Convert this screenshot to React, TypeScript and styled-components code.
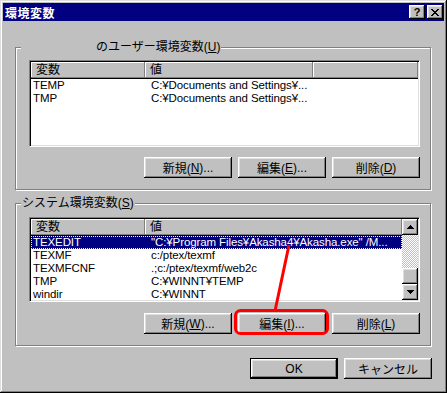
import React from 'react';
import styled, { createGlobalStyle, css } from 'styled-components';

const GlobalStyle = createGlobalStyle`
  html, body {
    margin: 0;
    padding: 0;
    background: #c0c0c0;
  }
  body {
    font-family: "Liberation Sans", "Noto Sans CJK JP", sans-serif;
    font-size: 12px;
    color: #000;
  }
`;

const raised = css`
  box-shadow: inset -1px -1px 0 #000, inset 1px 1px 0 #fff, inset -2px -2px 0 #808080,
    inset 2px 2px 0 #dfdfdf;
`;

const Window = styled.div`
  position: relative;
  width: 447px;
  height: 393px;
  box-sizing: border-box;
  padding: 3px;
  background: #c0c0c0;
  box-shadow: inset -1px -1px 0 #000, inset 1px 1px 0 #dfdfdf, inset -2px -2px 0 #808080,
    inset 2px 2px 0 #fff;
  display: flex;
  flex-direction: column;
`;

const TitleBar = styled.div`
  height: 18px;
  background: #000080;
  color: #fff;
  display: flex;
  align-items: center;
  padding: 0 1px 0 2px;
`;

const Title = styled.span`
  flex: 1;
  font-weight: bold;
  font-size: 12px;
  letter-spacing: 0.5px;
`;

const TitleButtons = styled.div`
  display: flex;
  gap: 2px;
`;

const CaptionButton = styled.div`
  width: 16px;
  height: 14px;
  background: #c0c0c0;
  ${raised};
  display: flex;
  align-items: center;
  justify-content: center;
  color: #000;
  font-weight: bold;
  font-size: 11px;
  line-height: 14px;
`;

const Body = styled.div`
  display: flex;
  flex-direction: column;
  padding: 26px 13px 0 12px;
`;

const Group = styled.div<{ $top?: number }>`
  position: relative;
  box-sizing: border-box;
  width: 416px;
  height: 143px;
  margin-top: ${(p) => p.$top ?? 0}px;
  border: 1px solid #808080;
  box-shadow: inset 1px 1px 0 #fff, 1px 1px 0 #fff;
  padding: ${(p) => (p.$top ? '13px' : '12px')} 10px 0 13px;
  display: flex;
  flex-direction: column;
`;

const Legend = styled.div`
  position: absolute;
  top: -8px;
  left: 5px;
  padding: 0 1px;
  line-height: 14px;
  background: #c0c0c0;
  white-space: nowrap;
`;

const UserName = styled.span`
  display: inline-block;
  width: 74px;
`;

const Key = styled.u`
  text-decoration: underline;
`;

const ListFrame = styled.div<{ $height: number }>`
  box-sizing: border-box;
  height: ${(p) => p.$height}px;
  background: #fff;
  border: 1px solid;
  border-color: #808080 #fff #fff #808080;
  box-shadow: inset 1px 1px 0 #000, inset -1px -1px 0 #dfdfdf;
  padding: 1px;
  display: flex;
`;

const ListMain = styled.div`
  flex: 1;
  min-width: 0;
  display: flex;
  flex-direction: column;
`;

const Header = styled.div`
  display: flex;
  height: 17px;
  background: #c0c0c0;
`;

const HeaderCell = styled.div<{ $w?: number }>`
  box-sizing: border-box;
  ${(p) => (p.$w ? `width: ${p.$w}px;` : 'flex: 1;')}
  height: 17px;
  line-height: 16px;
  padding-left: 5px;
  box-shadow: inset -1px -1px 0 #808080, inset 1px 1px 0 #fff;
  border-bottom: 1px solid #000;
`;

const Row = styled.div<{ $selected?: boolean }>`
  display: flex;
  height: 13px;
  line-height: 13px;
  font-size: 11.5px;
  letter-spacing: -0.1px;
  white-space: nowrap;
  ${(p) =>
    p.$selected &&
    css`
      background: #000080;
      color: #fff;
      outline: 1px dotted #ffff9a;
      outline-offset: -1px;
    `}
`;

const Cell = styled.div<{ $w?: number; $pad: number }>`
  box-sizing: border-box;
  ${(p) => (p.$w ? `width: ${p.$w}px;` : 'flex: 1;')}
  padding-left: ${(p) => p.$pad}px;
  overflow: hidden;
`;

const ScrollBar = styled.div`
  width: 16px;
  display: flex;
  flex-direction: column;
`;

const ScrollButton = styled.div`
  height: 16px;
  background: #c0c0c0;
  ${raised};
  display: flex;
  align-items: center;
  justify-content: center;
`;

const Track = styled.div`
  flex: 1;
  background: repeating-conic-gradient(#fff 0 25%, #c0c0c0 0 50%) 0 0 / 2px 2px;
`;

const ButtonRow = styled.div<{ $top: number }>`
  display: flex;
  justify-content: flex-end;
  gap: 6px;
  margin-top: ${(p) => p.$top}px;
`;

const Button = styled.div<{ $default?: boolean }>`
  box-sizing: border-box;
  width: 88px;
  height: 21px;
  background: #c0c0c0;
  ${raised};
  ${(p) =>
    p.$default &&
    css`
      border: 1px solid #000;
    `}
  display: flex;
  align-items: center;
  justify-content: center;
  white-space: nowrap;
`;

const Footer = styled(ButtonRow)`
  margin-right: -1px;
`;

const Annotation = styled.svg`
  position: absolute;
  left: 0;
  top: 0;
  pointer-events: none;
`;

type Var = [string, string];

const userVars: Var[] = [
  ['TEMP', 'C:¥Documents and Settings¥...'],
  ['TMP', 'C:¥Documents and Settings¥...'],
];

const systemVars: Var[] = [
  ['TEXEDIT', '"C:¥Program Files¥Akasha4¥Akasha.exe" /M...'],
  ['TEXMF', 'c:/ptex/texmf'],
  ['TEXMFCNF', '.;c:/ptex/texmf/web2c'],
  ['TMP', 'C:¥WINNT¥TEMP'],
  ['windir', 'C:¥WINNT'],
];

const Arrow = ({ up }: { up?: boolean }) => (
  <svg width="7" height="4" viewBox="0 0 7 4" shapeRendering="crispEdges">
    <path d={up ? 'M3 0h1v1h1v1h1v1h1v1H0V3h1V2h1V1h1z' : 'M0 0h7v1H6v1H5v1H4v1H3V3H2V2H1V1H0z'} fill="#000" />
  </svg>
);

const ListView = ({
  vars,
  widths,
  height,
  selected,
  scroll,
}: {
  vars: Var[];
  widths: number[];
  height: number;
  selected?: number;
  scroll?: boolean;
}) => (
  <ListFrame $height={height}>
    <ListMain>
      <Header>
        <HeaderCell $w={widths[0]}>変数</HeaderCell>
        <HeaderCell $w={widths[1]}>値</HeaderCell>
        {!scroll && <HeaderCell />}
      </Header>
      {vars.map(([name, value], i) => (
        <Row key={name + i} $selected={i === selected}>
          <Cell $w={widths[0]} $pad={2}>
            {name}
          </Cell>
          <Cell $pad={6}>{value}</Cell>
        </Row>
      ))}
    </ListMain>
    {scroll && (
      <ScrollBar>
        <ScrollButton>
          <Arrow up />
        </ScrollButton>
        <Track />
        <ScrollButton />
        <ScrollButton>
          <Arrow />
        </ScrollButton>
      </ScrollBar>
    )}
  </ListFrame>
);

export default function App() {
  return (
    <>
      <GlobalStyle />
      <Window>
        <TitleBar>
          <Title>環境変数</Title>
          <TitleButtons>
            <CaptionButton>?</CaptionButton>
            <CaptionButton>
              <svg width="8" height="7" viewBox="0 0 8 7" shapeRendering="crispEdges">
                <path
                  d="M0 0h2v1h1v1h2V1h1V0h2v1H7v1H6v1H5v1h1v1h1v1h1v1H6V6H5V5H3v1H2v1H0V6h1V5h1V4h1V3H2V2H1V1H0z"
                  fill="#000"
                />
              </svg>
            </CaptionButton>
          </TitleButtons>
        </TitleBar>

        <Body>
          <Group>
            <Legend>
              <UserName />
              のユーザー環境変数(<Key>U</Key>)
            </Legend>
            <ListView vars={userVars} widths={[114, 168]} height={87} />
            <ButtonRow $top={10}>
              <Button>
                新規(<Key>N</Key>)...
              </Button>
              <Button>
                編集(<Key>E</Key>)...
              </Button>
              <Button>
                削除(<Key>D</Key>)
              </Button>
            </ButtonRow>
          </Group>

          <Group $top={13}>
            <Legend>
              システム環境変数(<Key>S</Key>)
            </Legend>
            <ListView vars={systemVars} widths={[114]} height={85} selected={0} scroll />
            <ButtonRow $top={11}>
              <Button>
                新規(<Key>W</Key>)...
              </Button>
              <Button>
                編集(<Key>I</Key>)...
              </Button>
              <Button>
                削除(<Key>L</Key>)
              </Button>
            </ButtonRow>
          </Group>

          <Footer $top={12}>
            <Button $default>OK</Button>
            <Button>キャンセル</Button>
          </Footer>
        </Body>

        <Annotation width="447" height="393" viewBox="0 0 447 393">
          <line x1="289" y1="245" x2="275" y2="311" stroke="#ff0000" strokeWidth="3" />
          <rect x="235.5" y="310.5" width="92" height="23" rx="5" fill="none" stroke="#ff0000" strokeWidth="3" />
        </Annotation>
      </Window>
    </>
  );
}
